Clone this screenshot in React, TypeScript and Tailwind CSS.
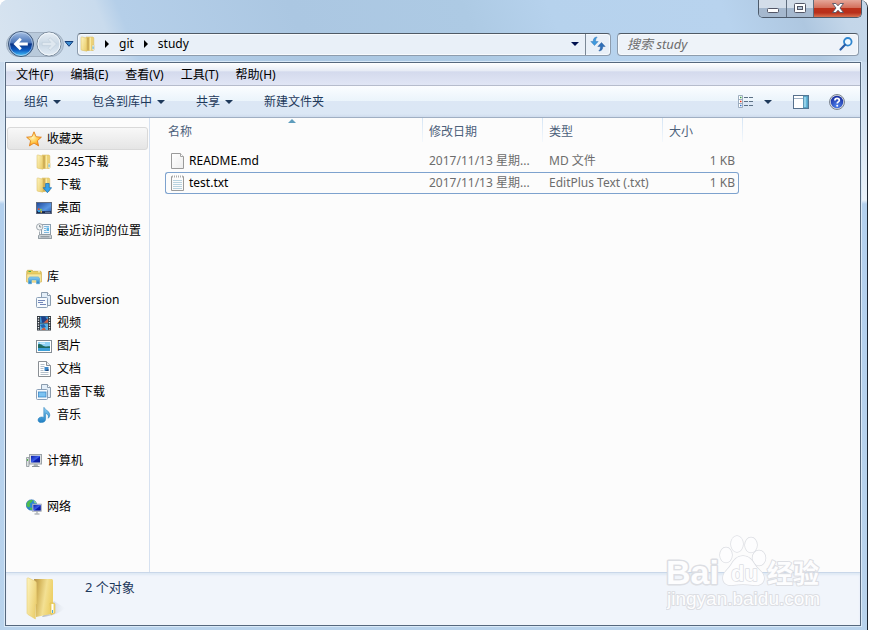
import { useState } from "react";
import type { ReactNode } from "react";

type IconProps = { className?: string };

interface FileItem {
  name: string;
  date: string;
  type: string;
  size: string;
  icon: ReactNode;
}

interface NavItem {
  label: string;
  icon: ReactNode;
}

interface NavGroup extends NavItem {
  items: NavItem[];
  active?: boolean;
}

function Svg({ children, className = "size-4" }: { children: ReactNode; className?: string }) {
  return (
    <svg viewBox="0 0 16 16" className={`shrink-0 ${className}`} aria-hidden="true">
      {children}
    </svg>
  );
}

function Gradients() {
  return (
    <svg className="absolute size-0" aria-hidden="true">
      <defs>
        <linearGradient id="gold" x1="0" x2="1" y1="0" y2="0.6">
          <stop offset="0" stopColor="#fdf4bf" />
          <stop offset="1" stopColor="#ecd071" />
        </linearGradient>
        <linearGradient id="goldBack" x1="0" x2="1" y1="0" y2="0.3">
          <stop offset="0" stopColor="#b3914a" />
          <stop offset="0.3" stopColor="#d5b65c" />
          <stop offset="0.65" stopColor="#f3e093" />
          <stop offset="1" stopColor="#edd068" />
        </linearGradient>
        <linearGradient id="shade" x1="0" x2="1" y1="0" y2="0">
          <stop offset="0" stopColor="#8e97a3" stopOpacity="0.7" />
          <stop offset="1" stopColor="#c9d0d9" stopOpacity="0" />
        </linearGradient>
        <linearGradient id="sky" x1="0" x2="0" y1="0" y2="1">
          <stop offset="0" stopColor="#8fd0f5" />
          <stop offset="1" stopColor="#1f7fc4" />
        </linearGradient>
        <linearGradient id="screen" x1="0" x2="1" y1="0" y2="1">
          <stop offset="0" stopColor="#0a1ea8" />
          <stop offset="0.5" stopColor="#3c5ee8" />
          <stop offset="0.6" stopColor="#0c20b4" />
          <stop offset="1" stopColor="#0a1a90" />
        </linearGradient>
        <linearGradient id="desk" x1="0" x2="1" y1="0" y2="1">
          <stop offset="0" stopColor="#1c4699" />
          <stop offset="0.6" stopColor="#5a97e2" />
          <stop offset="1" stopColor="#2456ab" />
        </linearGradient>
        <radialGradient id="star" cx="0.4" cy="0.4" r="0.6">
          <stop offset="0" stopColor="#fff6b8" />
          <stop offset="0.6" stopColor="#ffc84a" />
          <stop offset="1" stopColor="#ff941a" />
        </radialGradient>
        <linearGradient id="page" x1="0" x2="1" y1="0" y2="1">
          <stop offset="0" stopColor="#ffffff" />
          <stop offset="1" stopColor="#ededed" />
        </linearGradient>
        <linearGradient id="back" x1="0" x2="0" y1="0" y2="1">
          <stop offset="0" stopColor="#a9c3e6" />
          <stop offset="0.45" stopColor="#4773b8" />
          <stop offset="0.5" stopColor="#0b3384" />
          <stop offset="0.75" stopColor="#0f5ec4" />
          <stop offset="1" stopColor="#4fd0ff" />
        </linearGradient>
        <linearGradient id="forward" x1="0" x2="0" y1="0" y2="1">
          <stop offset="0" stopColor="#e8eff6" />
          <stop offset="0.5" stopColor="#cad8e5" />
          <stop offset="1" stopColor="#e3edf6" />
        </linearGradient>
        <radialGradient id="help" cx="0.5" cy="0.8" r="0.8">
          <stop offset="0" stopColor="#4f83ee" />
          <stop offset="1" stopColor="#14289c" />
        </radialGradient>
      </defs>
    </svg>
  );
}

function FolderShape() {
  return (
    <>
      <path d="M6 1h7l.8.8v12l-.8.7H6z" fill="#ecd278" stroke="#d9b95a" strokeWidth=".5" />
      <path d="M7 1.5h2v13H7z" fill="#cfae58" />
      <path d="M1 1.6c0-.5.4-.7.8-.7L6 2c.6.1.9.5.9 1v12.2l-5.200-1c-.5-.1-.7-.4-.7-.8z" fill="url(#gold)" stroke="#d9bb5b" strokeWidth=".5" />
      <path d="M10.500 1.500v13" stroke="#f9eaa5" />
    </>
  );
}

function FolderIcon({ className }: IconProps) {
  return (
    <Svg className={className}>
      <FolderShape />
      <rect x="12.2" y="9" width="1.8" height="5" rx=".6" fill="#eef9ff" stroke="#d5b95c" strokeWidth=".4" />
      <path d="M13.1 10.5v2.4" stroke="#3fa9e0" strokeWidth=".9" />
    </Svg>
  );
}

function DownloadFolderIcon() {
  return (
    <Svg>
      <FolderShape />
      <path d="M9.6 6.5h3.6v4.2h2.4l-4.2 5-4.2-5h2.4z" fill="#35a2ea" stroke="#1668b0" strokeWidth=".7" />
    </Svg>
  );
}

function StarIcon() {
  return (
    <Svg>
      <path d="m8 .8 2.1 4.9 5.3.5-4 3.5 1.2 5.2L8 12.1l-4.6 2.8 1.2-5.2-4-3.5 5.3-.5z" fill="url(#star)" stroke="#e07b12" strokeWidth=".8" strokeLinejoin="round" />
    </Svg>
  );
}

function DesktopIcon() {
  return (
    <Svg>
      <rect x=".5" y="2.5" width="15" height="11" fill="url(#desk)" stroke="#5f6b80" />
      <rect x="1" y="11.2" width="14" height="2" fill="#15254e" />
      <circle cx="2.8" cy="9.2" r="1" fill="#e0552c" />
      <circle cx="4.9" cy="9.8" r="1" fill="#8bd04b" />
      <circle cx="3" cy="11.3" r="1" fill="#38b7ee" />
      <circle cx="5.2" cy="11.8" r=".9" fill="#f6d143" />
      <path d="M9 12.3h5.4" stroke="#8c9ab8" strokeWidth=".8" />
    </Svg>
  );
}

function RecentIcon() {
  return (
    <Svg>
      <rect x="5.5" y="1.5" width="9" height="10" fill="#f1f6fa" stroke="#8da0b0" />
      <path d="M8 3.500h5M8 5.500h2M8 7.500h2M8 9.500h5" stroke="#7fb8de" />
      <rect x="10.5" y="4.500" width="2.5" height="3.500" fill="#58b4e8" />
      <path d="M3.500 8.500v3.500l-1 1v2.500h13V13l-1-1V9.500" fill="none" stroke="#8b959d" strokeWidth=".8" />
      <path d="M3.500 11.500h11l1 1.500v2.500h-13V13z" fill="#ccd2d6" stroke="#8b959d" strokeWidth=".8" />
      <path d="M4.500 13.800h9" stroke="#7d878f" />
      <circle cx="3.7" cy="3.9" r="3.2" fill="#f3f5f6" stroke="#a0a8ae" />
      <path d="M3.7 2v2h1.6" stroke="#5f6a72" strokeWidth=".8" fill="none" />
    </Svg>
  );
}

function LibraryIcon() {
  return (
    <Svg>
      <path d="M.8 2.2c0-.5.4-.9.9-.9h4.5l1.2 1h7c.5 0 .9.4.9.9v9.6H.8z" fill="#e9ce63" stroke="#c9a845" strokeWidth=".7" />
      <path d="M.8 5h14.5v8H.8z" fill="#f7e79f" stroke="#d0b14f" strokeWidth=".5" />
      <path d="M2.5 2.5H5" stroke="#3fae4a" />
      <path d="M12 2.8h2" stroke="#fff7cf" />
      <path d="M2.5 14.7V9.8c0-1.1.8-1.8 1.8-1.8h7.4c1 0 1.8.7 1.8 1.8v4.9h-3v-3c0-.5-.3-.8-.8-.8H6.3c-.5 0-.8.3-.8.8v3z" fill="url(#sky)" stroke="#5ba9d4" strokeWidth=".7" />
    </Svg>
  );
}

function StackedPageIcon({ children }: { children: ReactNode }) {
  return (
    <Svg>
      <path d="M5.5.5h6l3 3v10h-9z" fill="#e3eef8" stroke="#8b9cae" />
      <path d="M11.5.5v3h3" fill="#fff" stroke="#8b9cae" />
      <rect x=".5" y="5.5" width="11" height="10" rx="1" fill="#f6fafd" stroke="#8ba0b8" />
      {children}
    </Svg>
  );
}

function VideoIcon() {
  return (
    <Svg>
      <rect x="1" y="1" width="14" height="14.5" fill="#30373f" />
      <rect x="4" y="1.5" width="8" height="6.3" fill="#3b8fd0" />
      <rect x="4" y="8.5" width="8" height="6.5" fill="#5db3e6" />
      <path d="M5 1.5h4L11.5 5 9 7.8H6z" fill="#1d3f87" />
      <path d="m7.5 7.8 4.5-4v4zM5 15l3-3 2 3z" fill="#d05d3f" />
      <path d="m4 10 4-1 2 3-4 1z" fill="#2263ae" />
      <path d="M2.5 2v13M13.5 2v13" stroke="#f2f4f5" strokeWidth="1.3" strokeDasharray="1.3 1.2" />
    </Svg>
  );
}

function PictureIcon() {
  return (
    <Svg>
      <rect x=".5" y="2.5" width="15" height="12" fill="#fff" stroke="#858d95" />
      <rect x="2" y="4" width="12" height="9" fill="#8fd2f5" />
      <path d="M2 6.5c2-1 3.5.2 5 1.2s4 .7 7 .6v2H2z" fill="#1e6a60" />
      <path d="M2 10h12v3H2z" fill="#3d9fd7" />
      <path d="M4 5.2h5" stroke="#e9f8ff" />
    </Svg>
  );
}

function DocumentIcon() {
  return (
    <Svg>
      <path d="M2.5.5h8l4 4v11h-12z" fill="#fff" stroke="#8a8f94" />
      <path d="M10.5.5v4h4" fill="#e9edf0" stroke="#8a8f94" />
      <path d="M4.5 3.5h4M4.5 5.5h4M4.5 7.5h3M4.5 9.5h3M4.5 11.5h8M4.5 13.5h8" stroke="#b4bfc9" />
      <rect x="8.5" y="6" width="4" height="4" fill="#3d87c9" />
      <path d="M9 10h3.5V8z" fill="#21426f" />
    </Svg>
  );
}

function MusicIcon() {
  return (
    <Svg>
      <path d="M8.2.5c.5 2.6 5.6 3.3 5.6 7.3 0 1.6-.7 2.7-1.6 3.5.6-2.7-.3-4.3-2.6-5v6c0 2-1.9 3.3-4.2 3.3-2 0-3.4-1-3.4-2.6 0-1.7 1.7-3 3.8-3 .8 0 1.500.2 2 .5V.5z" fill="url(#sky)" stroke="#1876b5" strokeWidth=".5" />
    </Svg>
  );
}

function ComputerIcon() {
  return (
    <Svg>
      <path d="M.5 4.500h2.500v9H.5z" fill="#dfe3e5" stroke="#8d959b" strokeWidth=".8" />
      <path d="M1.5 6v2" stroke="#54b948" />
      <rect x="3.5" y="1.5" width="12" height="9.500" fill="#d9dddf" stroke="#9ca3a8" />
      <rect x="5" y="2.8" width="9" height="6.7" fill="url(#screen)" />
      <path d="M8 11h3.5l.5 2H7.5z" fill="#a9b0b4" />
      <path d="M6 13.5h7.5" stroke="#8b9398" />
    </Svg>
  );
}

function NetworkIcon() {
  return (
    <Svg>
      <circle cx="5.5" cy="6" r="5.3" fill="#2a86d8" stroke="#1d62ab" strokeWidth=".5" />
      <path d="M2 2.5C4 .6 6 .8 7 1.2L5.5 3.5 3.500 5l1 2-2 1.500L.6 7C.3 5.200.9 3.500 2 2.500zM4 8.500l2 .3.5 2.200H5L3.600 10z" fill="#4fbd4e" />
      <path d="M7.5 1.5c1.500.6 2.600 1.700 3 3l-2-.5z" fill="#8fe07a" />
      <rect x="6.5" y="5" width="9" height="7.5" fill="#cfd5da" stroke="#9aa2a8" strokeWidth=".6" />
      <rect x="7.3" y="5.8" width="7.5" height="5.8" fill="url(#screen)" />
      <path d="M11 12.5v2M8.5 15h5" stroke="#8d959b" />
    </Svg>
  );
}

function BlankFileIcon() {
  return (
    <Svg>
      <path d="M1.5.5h9l3 3v12h-12z" fill="url(#page)" stroke="#9a9a9a" />
      <path d="M10.5.5v3h3" fill="#fff" stroke="#a4a4a4" />
    </Svg>
  );
}

function TextFileIcon() {
  return (
    <Svg>
      <path d="M1.5 1.5h12v14h-12z" fill="#fbfbfb" stroke="#9a9a9a" />
      <path d="M3 5.5h9M3 7.5h9M3 9.5h9M3 11.5h9M3 13.5h9" stroke="#b9d3e0" />
      <path d="M2 1.5h11" stroke="#fff" strokeWidth="1.5" />
      <path d="M2.5.5v2M4.5.5v2M6.5.5v2M8.5.5v2M10.5.5v2M12.5.5v2" stroke="#a3a3a3" strokeWidth=".9" />
    </Svg>
  );
}

function Caret() {
  return (
    <svg viewBox="0 0 8 4" className="h-1 w-2 shrink-0" aria-hidden="true">
      <path d="M0 0h8L4 4z" fill="currentColor" />
    </svg>
  );
}

function Crumb() {
  return (
    <svg viewBox="0 0 4 8" className="h-2 w-1 shrink-0" aria-hidden="true">
      <path d="M0 0v8l4-4z" fill="#000" />
    </svg>
  );
}

const groups: NavGroup[] = [
  {
    label: "收藏夹",
    icon: <StarIcon />,
    active: true,
    items: [
      { label: "2345下载", icon: <FolderIcon /> },
      { label: "下载", icon: <DownloadFolderIcon /> },
      { label: "桌面", icon: <DesktopIcon /> },
      { label: "最近访问的位置", icon: <RecentIcon /> },
    ],
  },
  {
    label: "库",
    icon: <LibraryIcon />,
    items: [
      {
        label: "Subversion",
        icon: (
          <StackedPageIcon>
            <path d="M2 8.5h7M2 10.5h5M4 12.5h6" stroke="#7286b8" />
          </StackedPageIcon>
        ),
      },
      { label: "视频", icon: <VideoIcon /> },
      { label: "图片", icon: <PictureIcon /> },
      { label: "文档", icon: <DocumentIcon /> },
      {
        label: "迅雷下载",
        icon: (
          <StackedPageIcon>
            <rect x="2.5" y="8" width="7.5" height="5" fill="#7cc3f2" stroke="#3c87c6" strokeWidth=".8" />
          </StackedPageIcon>
        ),
      },
      { label: "音乐", icon: <MusicIcon /> },
    ],
  },
  { label: "计算机", icon: <ComputerIcon />, items: [] },
  { label: "网络", icon: <NetworkIcon />, items: [] },
];

const files: FileItem[] = [
  { name: "README.md", date: "2017/11/13 星期...", type: "MD 文件", size: "1 KB", icon: <BlankFileIcon /> },
  { name: "test.txt", date: "2017/11/13 星期...", type: "EditPlus Text (.txt)", size: "1 KB", icon: <TextFileIcon /> },
];

const menus = ["文件(F)", "编辑(E)", "查看(V)", "工具(T)", "帮助(H)"];

function WindowButtons() {
  return (
    <div className="mr-[5px] flex h-[18px] overflow-hidden rounded-b-[5px] border border-t-0 border-[#4c5a6b]">
      <button aria-label="最小化" className="flex w-7 items-end justify-center border-r border-[#5f6d7e] bg-linear-to-b from-[#d3dde9] from-45% to-[#a5b8ce] to-50% pb-1">
        <svg viewBox="0 0 12 5" className="h-[5px] w-3">
          <rect x=".5" y=".5" width="11" height="4" rx="1" fill="#fff" stroke="#535666" />
        </svg>
      </button>
      <button aria-label="最大化" className="flex w-[27px] items-center justify-center border-r border-[#5f6d7e] bg-linear-to-b from-[#d3dde9] from-45% to-[#a5b8ce] to-50% pb-0.5">
        <svg viewBox="0 0 12 10" className="h-2.5 w-3">
          <rect x=".5" y=".5" width="11" height="9" rx="1" fill="#fff" stroke="#535666" />
          <rect x="3.5" y="3.5" width="5" height="3" fill="#b5c4d6" stroke="#535666" />
        </svg>
      </button>
      <button aria-label="关闭" className="flex w-[47px] items-center justify-center bg-[linear-gradient(180deg,#e5a698_0%,#d4705c_45%,#bc3019_50%,#b82f1b_75%,#d8714f_100%)] pb-0.5">
        <svg viewBox="0 0 12 10" className="h-2.5 w-3">
          <path d="M.5.5h3.4L6 2.8 8.1.5h3.4L8 5l3.5 4.5H8.1L6 7.2 3.9 9.5H.5L4 5z" fill="#fff" stroke="#535666" strokeWidth=".9" strokeLinejoin="round" />
        </svg>
      </button>
    </div>
  );
}

function NavButtons() {
  return (
    <div className="flex w-[69px] shrink-0 items-center">
      <div className="flex h-[25px] items-center rounded-full border border-[#a3b2c3] bg-[#b9cadb]">
        <button aria-label="后退" className="size-7">
          <svg viewBox="0 0 28 28" className="size-7">
            <circle cx="14" cy="14" r="12.5" fill="url(#back)" stroke="#3e5676" />
            <circle cx="14" cy="14" r="11.5" fill="none" stroke="#c4d8ef" strokeOpacity=".7" />
            <path d="m6.5 14 6.3-6.3 2 2-2.6 2.700h8.600v3.200h-8.600l2.600 2.700-2 2z" fill="#fff" />
          </svg>
        </button>
        <button aria-label="前进" className="size-7">
          <svg viewBox="0 0 28 28" className="size-7">
            <circle cx="14" cy="14" r="12" fill="url(#forward)" stroke="#7e8e9f" />
            <circle cx="14" cy="14" r="11" fill="none" stroke="#f3f8fc" />
            <path d="m21.5 14-6.3-6.3-2 2 2.600 2.700H7.200v3.200h8.600l-2.600 2.700 2 2z" fill="#dfe8f0" stroke="#bccbd8" strokeWidth=".6" />
          </svg>
        </button>
      </div>
      <button aria-label="最近浏览" className="w-2.5">
        <svg viewBox="0 0 10 6" className="h-1.5 w-2.5">
          <path d="M1 .5h8L5 5.3z" fill="#3c8cd0" stroke="#153f7c" />
        </svg>
      </button>
    </div>
  );
}

function Toolbar() {
  return (
    <div className="flex h-8 items-center border-b border-[#a0afc3] bg-[linear-gradient(180deg,#fbfdff_0%,#ebf4fb_48%,#dce7f5_50%,#dbe7f5_90%,#cfdced_100%)] pr-[15px] pl-[18px] text-[#1e395b]">
      <button className="mr-[31px] flex items-center gap-[5px]">组织<Caret /></button>
      <button className="mr-[31px] flex items-center gap-[5px]">包含到库中<Caret /></button>
      <button className="mr-[31px] flex items-center gap-[5px]">共享<Caret /></button>
      <button>新建文件夹</button>
      <div className="ml-auto flex items-center">
        <button aria-label="更改视图" className="flex items-center gap-2.5">
          <Svg>
            <path d="M.5 1.5h4v12h-4zM.5 5.5h4M.5 9.5h4" fill="#fff" stroke="#93a5b8" strokeWidth=".9" />
            <path d="M2 3.5h1.5" stroke="#3b9b46" strokeWidth="1.5" />
            <path d="M2 7.5h1.5" stroke="#d8321f" strokeWidth="1.5" />
            <path d="M2 11.5h1.5" stroke="#2e6fd0" strokeWidth="1.5" />
            <path d="M6 3.5h4M11 3.5h4M6 7.5h4M11 7.5h4M6 11.5h4M11 11.5h4" stroke="#5c7085" />
          </Svg>
          <Caret />
        </button>
        <button aria-label="显示预览窗格" className="ml-[21px]">
          <Svg>
            <rect x=".5" y="1.5" width="15" height="13" fill="#fff" stroke="#56708c" />
            <path d="M1 4.5h9" stroke="#9fb1c4" />
            <rect x="10.5" y="2" width="4.5" height="12" fill="#62b6d9" stroke="#4b88a8" strokeWidth=".8" />
            <path d="M12 3v10" stroke="#b6e4f4" strokeWidth="1.2" />
          </Svg>
        </button>
        <button aria-label="帮助" className="ml-5">
          <Svg>
            <circle cx="8" cy="8" r="7.5" fill="#d9dee6" stroke="#6f7885" strokeWidth=".9" />
            <circle cx="8" cy="8" r="6.2" fill="url(#help)" />
            <path d="M5.9 6.5c0-1.4 1-2.1 2.2-2.1s2.2.7 2.2 1.9c0 1.6-2.1 1.5-2.1 3.2" fill="none" stroke="#fff" strokeWidth="1.7" />
            <circle cx="8.2" cy="11.7" r="1" fill="#fff" />
          </Svg>
        </button>
      </div>
    </div>
  );
}

function Sidebar() {
  return (
    <nav className="w-36 shrink-0 border-r border-[#d6e1f0] pt-[9px] pr-px pl-px">
      {groups.map((group) => (
        <div key={group.label} className="mb-[23px]">
          <a
            href="#"
            className={
              group.active
                ? "flex h-[23px] items-center gap-[5px] rounded-[3px] border border-[#d9d9d9] bg-linear-to-b from-[#f8f8f8] to-[#e5e5e5] pl-[18px]"
                : "flex h-[23px] items-center gap-[5px] pl-[19px]"
            }
          >
            {group.icon}
            {group.label}
          </a>
          {group.items.map((item) => (
            <a key={item.label} href="#" className="flex h-[23px] items-center gap-[5px] pl-[29px] whitespace-nowrap">
              {item.icon}
              {item.label}
            </a>
          ))}
        </div>
      ))}
    </nav>
  );
}

function HeaderCell({ children, divider = "right-0" }: { children: ReactNode; divider?: string }) {
  return (
    <th className="relative h-7 p-0 text-left font-normal">
      {children}
      <span className={`absolute top-0 h-6 w-px bg-linear-to-b from-[#d5e5f5] to-[#f4f8fc] ${divider}`} />
    </th>
  );
}

function FileTable() {
  const [selected, setSelected] = useState("test.txt");
  return (
    <table className="ml-[15px] w-[574px] table-fixed border-separate border-spacing-0">
      <colgroup>
        <col className="w-[258px]" />
        <col className="w-[120px]" />
        <col className="w-[120px]" />
        <col />
      </colgroup>
      <thead className="text-[#4c607a]">
        <tr>
          <HeaderCell>
            <span className="pl-[3px]">名称</span>
            <svg viewBox="0 0 8 4" className="absolute top-px left-[123px] h-1 w-2" aria-hidden="true">
              <path d="M4 0 0 4h8z" fill="#5f9dbd" />
            </svg>
          </HeaderCell>
          <HeaderCell><span className="pl-1.5">修改日期</span></HeaderCell>
          <HeaderCell><span className="pl-1.5">类型</span></HeaderCell>
          <HeaderCell divider="-right-1"><span className="pl-1.5">大小</span></HeaderCell>
        </tr>
        <tr aria-hidden="true"><td className="h-1 p-0" /></tr>
      </thead>
      <tbody>
        {files.map((file) => {
          const edge = file.name === selected ? "border-[#7da2ce]" : "border-transparent";
          return (
            <tr key={file.name} onClick={() => setSelected(file.name)} className="text-[#6d6d6d]">
              <td className={`h-[22px] rounded-l-[3px] border-y border-l p-0 pl-1 text-black ${edge}`}>
                <div className="flex items-center gap-[3px]">
                  {file.icon}
                  {file.name}
                </div>
              </td>
              <td className={`truncate border-y p-0 pl-1.5 ${edge}`}>{file.date}</td>
              <td className={`truncate border-y p-0 pl-1.5 ${edge}`}>{file.type}</td>
              <td className={`rounded-r-[3px] border-y border-r p-0 pr-[3px] text-right ${edge}`}>{file.size}</td>
            </tr>
          );
        })}
      </tbody>
    </table>
  );
}

function Watermark() {
  return (
    <svg viewBox="0 0 160 80" className="pointer-events-none absolute right-[34px] bottom-[11px] h-20 w-40" role="img" aria-label="Baidu 经验">
      <g fill="#fdfdfe" stroke="#dcdee3" strokeWidth="1.5" strokeLinejoin="round" paintOrder="stroke">
        <text x="0" y="50" fontFamily="Liberation Sans" fontSize="34" fontWeight="700" strokeWidth="3">Bai</text>
        <ellipse cx="60" cy="21" rx="6" ry="7.5" />
        <ellipse cx="71" cy="10" rx="6" ry="8" />
        <ellipse cx="85" cy="11" rx="6" ry="7.5" />
        <ellipse cx="93" cy="24" rx="6.5" ry="7.5" />
        <path d="M77 22c6 0 9 4 12 9s9 7 9 13-5 8-11 7c-7-1-13-1-20 0-6 1-10-2-10-7 0-6 5-8 8-13s6-9 12-9z" />
        <text x="65" y="47" fontFamily="Liberation Sans" fontSize="22" fontWeight="700">du</text>
        <text x="101" y="49" fontFamily="Liberation Sans, Noto Sans CJK SC, sans-serif" fontSize="26" fontWeight="700" strokeWidth="2">经验</text>
        <text x="1" y="71" fontFamily="Liberation Sans" fontSize="19" strokeWidth="2">jingyan.baidu.com</text>
      </g>
    </svg>
  );
}

export default function App() {
  const [query, setQuery] = useState("");
  return (
    <div className="min-h-screen bg-white pr-0.5 font-['Noto_Sans','Noto_Sans_CJK_SC',sans-serif] text-[12px] leading-4 text-black">
      <Gradients />
      <div className="flex min-h-screen flex-col rounded-t-lg border-r border-[#1c2530] bg-[linear-gradient(180deg,#c8daed_60px,#e9f1f9_200px,#b3d0ee_204px,#b9d3ec_100%)]">
        <header className="rounded-t-lg bg-[linear-gradient(68deg,#d8e4f0_0px,#c9dbed_110px,#b5cfe9_130px,#abc7e2_290px,#adcae4_450px,#b6d2ed_530px,#b8d3ee_690px,#aec7e0_760px,#c3d6e9_800px,#cbdbec_900px)]">
          <div className="flex justify-end">
            <WindowButtons />
          </div>
          <div className="mt-3 mb-1 flex h-7 items-center pr-2 pl-1.5">
            <NavButtons />
            <div className="ml-0.5 flex h-[23px] min-w-0 flex-1 items-center rounded-sm border border-[#8d9cad] border-t-[#4f5a66] bg-[#e9f0f8] shadow-[inset_0_0_0_1px_#f7fafd]">
              <FolderIcon className="ml-0.5 size-4" />
              <span className="ml-[9px]"><Crumb /></span>
              <button className="ml-2.5">git</button>
              <span className="ml-2.5"><Crumb /></span>
              <button className="ml-2.5">study</button>
              <button aria-label="上一个位置" className="ml-auto px-1.5 text-[#00104f]"><Caret /></button>
              <button aria-label="刷新" className="flex h-full w-[25px] items-center justify-center border-l border-[#7b8896]">
                <Svg>
                  <path d="M6.5 1C4 1.500 3.200 3 3.200 5.500H.8l3.700 4 3.700-4H5.600C5.600 3.500 5.800 2.300 7.200 1.200z" fill="#3f9ade" stroke="#2869ab" strokeWidth=".4" />
                  <path d="M9.500 15c2.500-.5 3.300-2 3.300-4.500h2.400l-3.700-4-3.700 4h2.600c0 2-.2 3.200-1.600 4.300z" fill="#2f6fb8" stroke="#1f528f" strokeWidth=".4" />
                </Svg>
              </button>
            </div>
            <label className="ml-1.5 flex h-[23px] w-[242px] items-center rounded-sm border border-[#8d9cad] border-t-[#4f5a66] bg-[#eef3f9] pr-1 pl-[9px] shadow-[inset_0_0_0_1px_#f7fafd]">
              <input
                aria-label="搜索 study"
                className="min-w-0 flex-1 text-[13px] italic outline-none placeholder:text-[#6d6d6d]"
                placeholder="搜索 study"
                value={query}
                onChange={(e) => setQuery(e.target.value)}
              />
              <Svg>
                <circle cx="9.8" cy="5.8" r="3.8" fill="#eef8ff" stroke="#2f86cf" strokeWidth="1.8" />
                <path d="m7 8.800-4.500 4.700" stroke="#2a5ea8" strokeWidth="2.2" strokeLinecap="round" />
              </Svg>
            </label>
          </div>
        </header>
        <main className="mr-1.5 mb-1 ml-[5px] flex flex-1 flex-col border border-[#56687d] bg-[#fcfcfc] shadow-[0_0_0_1px_#d9e9f8]">
          <div className="flex h-[23px] shrink-0 items-center gap-[17px] border-b border-[#b6bccc] bg-[linear-gradient(180deg,#ffffff_0%,#e6ebf5_36%,#d4daed_40%,#e1e6f5_100%)] pt-0.5 pl-2.5">
            {menus.map((menu) => (
              <button key={menu}>{menu}</button>
            ))}
          </div>
          <Toolbar />
          <div className="flex flex-1">
            <Sidebar />
            <section className="min-w-0 flex-1">
              <FileTable />
            </section>
          </div>
          <footer className="relative flex h-[53px] shrink-0 border-t border-[#c9d7e9] bg-[#f1f5fb] pl-5 text-[#1e395b] shadow-[inset_0_2px_2px_#dfe9f5]">
            <svg viewBox="0 0 40 44" className="mt-1 h-11 w-10 shrink-0" aria-hidden="true">
              <path d="m16 40 12-16 11 7c-3 4-12 8-23 9z" fill="url(#shade)" />
              <path d="M8 2h17c1.500 0 2 .5 2 2v31c0 1.500-.5 2-2 2l-15 3z" fill="url(#goldBack)" />
              <path d="M1 2c0-1 .6-1.400 1.500-1L9 4c1 .5 1.400 1.200 1.400 2.200V27l-1 .8V42L2 37.500c-.7-.4-1-1-1-2z" fill="url(#gold)" stroke="#e7cc73" strokeWidth=".6" />
              <path d="M24 26h3.500c1 0 1.500.6 1.500 1.600V36l-4 2z" fill="#efd66c" stroke="#d8b64a" strokeWidth=".5" />
              <rect x="25.5" y="27" width="2" height="9" fill="#fff" />
              <path d="M26.500 33v3" stroke="#4fa9dd" />
            </svg>
            <span className="mt-1.5 ml-[19px] text-[13px]">2 个对象</span>
            <Watermark />
          </footer>
        </main>
      </div>
    </div>
  );
}
